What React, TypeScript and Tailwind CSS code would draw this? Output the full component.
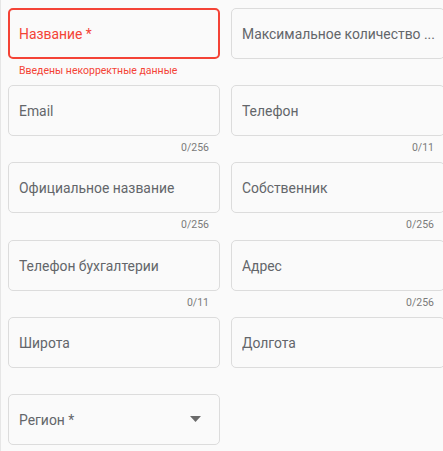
import React from 'react'

type Field = {
  label: string
  required?: boolean
  error?: string
  counter?: string
  select?: boolean
}

const rows: Field[][] = [
  [
    { label: 'Название', required: true, error: 'Введены некорректные данные' },
    { label: 'Максимальное количество ...' },
  ],
  [
    { label: 'Email', counter: '0/256' },
    { label: 'Телефон', counter: '0/11' },
  ],
  [
    { label: 'Официальное название', counter: '0/256' },
    { label: 'Собственник', counter: '0/256' },
  ],
  [
    { label: 'Телефон бухгалтерии', counter: '0/11' },
    { label: 'Адрес', counter: '0/256' },
  ],
  [{ label: 'Широта' }, { label: 'Долгота' }],
  [{ label: 'Регион', required: true, select: true }],
]

function TextField({ f }: { f: Field }) {
  const err = !!f.error
  return (
    <div className="flex flex-col">
      <div
        className={`h-[51px] rounded-[5px] flex items-center bg-[#fafafa] ${f.select ? 'pr-[18px]' : 'pr-[2px]'} ${
          err ? 'border-2 border-[#f44336] pl-[9px]' : 'border border-[#dcdcdc] pl-[10px]'
        }`}
      >
        <span
          className={`flex-1 whitespace-nowrap overflow-hidden text-[13.9px] leading-[20px] pt-px ${
            err ? 'text-[#f44336]' : 'text-[#63666a]'
          }`}
        >
          {f.label}
          {f.required && ' *'}
        </span>
        {f.select && (
          <svg width="11" height="6" viewBox="0 0 11 6" className="shrink-0">
            <path d="M0 0h11L5.5 6z" fill="#6b6b6b" />
          </svg>
        )}
      </div>
      <div className="h-[26.2px] pt-[5px] text-[10.5px] leading-[14px] px-[11px]">
        {f.error && <span className="text-[#f44336]">{f.error}</span>}
        {f.counter && <div className="text-right text-[#7a7a7a]">{f.counter}</div>}
      </div>
    </div>
  )
}

export default function App() {
  return (
    <div
      className="w-[443px] h-[451px] overflow-hidden bg-[#fafafa] border-l border-[#e6e6e6]"
      style={{ fontFamily: 'Roboto, "Noto Sans", sans-serif' }}
    >
      <div className="grid grid-cols-[212px_214px] gap-x-[11px] pl-[7px] pt-[8px]">
        {rows.map((r, i) => (
          <React.Fragment key={i}>
            {r.map((f) => (
              <TextField key={f.label} f={f} />
            ))}
            {r.length === 1 && <div />}
          </React.Fragment>
        ))}
      </div>
    </div>
  )
}
